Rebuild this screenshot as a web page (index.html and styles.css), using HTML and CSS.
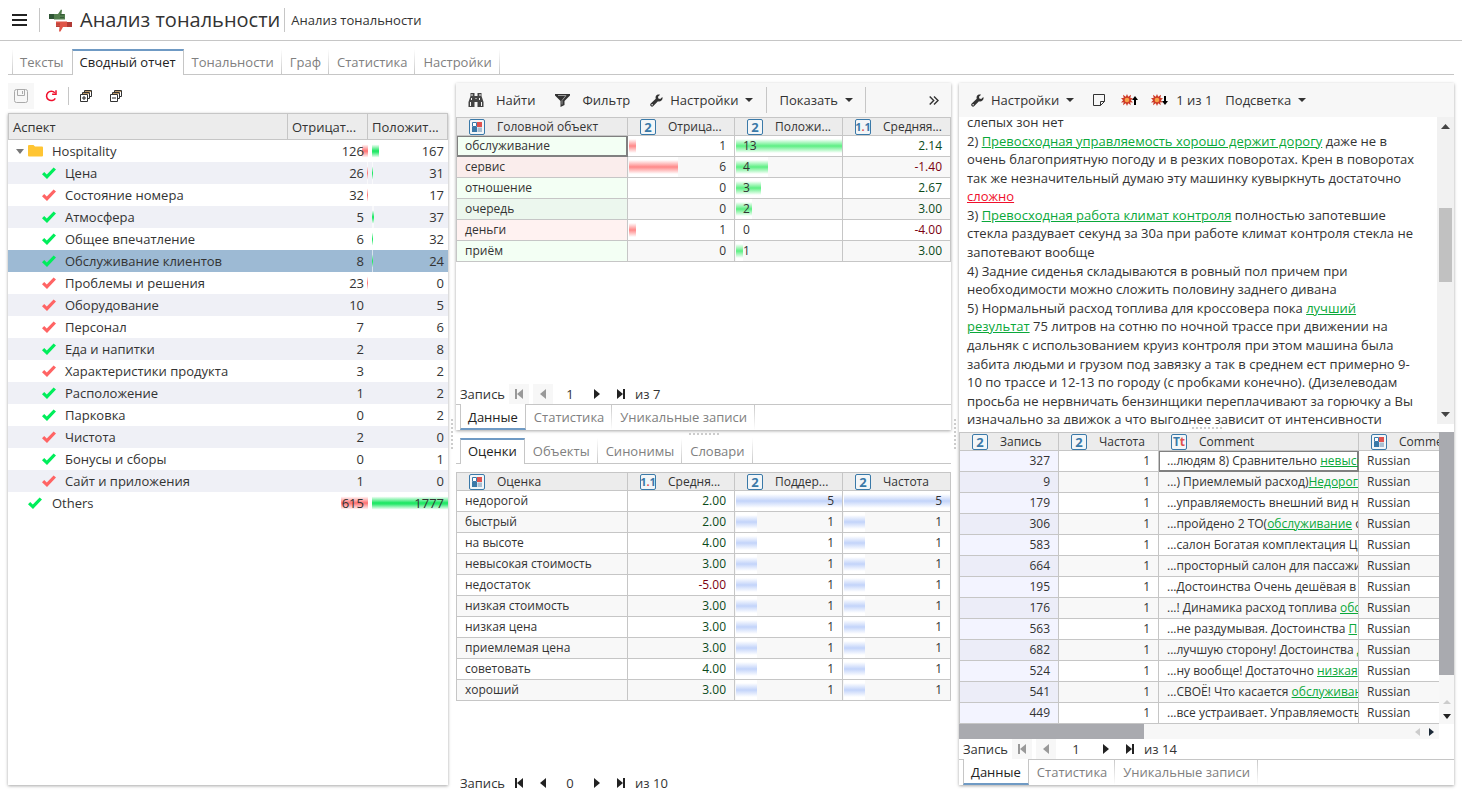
FILE: index.html
```html
<!DOCTYPE html>
<html lang="ru">
<head>
<meta charset="utf-8">
<title>Анализ тональности</title>
<link rel="stylesheet" href="styles.css">
</head>
<body>
<svg class="sprite" aria-hidden="true">
  <symbol id="check" viewBox="0 0 14 12"><path d="M0 7.2 2.2 5l2.6 2.4L11.6.6 14 2.4 5 12z" fill="currentColor"/></symbol>
  <symbol id="folder" viewBox="0 0 15 12"><path d="M1 0h4.500l1.500 1.500H14a1 1 0 0 1 1 1V10.500a1 1 0 0 1-1 1H1a1 1 0 0 1-1-1V1a1 1 0 0 1 1-1z" fill="#ffc533"/></symbol>
  <symbol id="wrench" viewBox="0 0 14 14"><path d="M13.300 3.200 11 5.300 9 4.900 8.600 3 10.800.8C9.300.2 7.400.6 6.500 2 5.900 3 5.900 4.200 6.200 5.200L.8 10.200c-.8.8-.8 2 0 2.800s2 .8 2.800 0L8.600 7.800c1.200.4 2.700.2 3.700-.7 1.100-1 1.500-2.500 1-3.900z" fill="#333"/><circle cx="2.300" cy="11.600" r=".8" fill="#f7f7f7"/></symbol>
  <symbol id="first" viewBox="0 0 10 12"><path d="M2 1v10" stroke="currentColor" stroke-width="2"/><path d="M9 1v10L3 6z" fill="currentColor"/></symbol>
  <symbol id="prev" viewBox="0 0 10 12"><path d="M8 1v10L2 6z" fill="currentColor"/></symbol>
  <symbol id="next" viewBox="0 0 10 12"><path d="M2 1v10L8 6z" fill="currentColor"/></symbol>
  <symbol id="last" viewBox="0 0 10 12"><path d="M8 1v10" stroke="currentColor" stroke-width="2"/><path d="M1 1v10L7 6z" fill="currentColor"/></symbol>
  <symbol id="kind" viewBox="0 0 12 12"><path d="M1.500 1.500h4v4h-4z" fill="#fff" stroke="#3a79a8"/><path d="M6 1h5v5H6z" fill="#e0524e"/><path d="M1 6h5v5H1z" fill="#3a79a8"/><path d="M6.500 6.500H11V11H6.500z" fill="#a9bfd2"/></symbol>
  <symbol id="bang" viewBox="0 0 12 12"><path d="M6 0 7.200 2.800 10 .8 9.400 3.900 12 4.200 9.900 6.200 12 8.400 9.200 8.300 9.800 11.300 7.200 9.300 6 12 4.800 9.300 2 11.300 2.700 8.300 0 8.600 2.100 6.200 0 3.900 2.700 3.900 2 .8 4.800 2.800z" fill="#cf3b28"/><circle cx="6" cy="6" r="2.300" fill="#f7a14a"/></symbol>
  <symbol id="stack" viewBox="0 0 12 12"><path d="M4.500 2V.500h7v6H10M2.500 4V2.500h7v6H8" fill="none" stroke="#333"/><path d="M5 1h6v1H5zM3 3h6v1H3z" fill="#b89565"/><path d="M.5 4.500h7v7h-7z" fill="#fff" stroke="#333"/><path d="M2 8h4" stroke="#222"/></symbol>
</svg>

<header class="top">
  <button class="menu" aria-label="Меню"><svg width="15" height="12" viewBox="0 0 15 12"><path d="M0 1h15M0 6h15M0 11h15" stroke="#222" stroke-width="2"/></svg></button>
  <i class="rule"></i>
  <svg class="logo" width="23" height="23" viewBox="0 0 23 23"><path d="M0 5h5v5H0z" fill="#2f5535"/><path d="M5 5h4l3-4.500L13 1l-.5 4H16v5.500H5z" fill="#527e4d"/><path d="M11 5h4v1.300h-4zM11 8h4v1h-4z" fill="#365d39"/><path d="M18 13h5v5h-5z" fill="#b13a35"/><path d="M18 12.500H7V18h3.500l-.5 4.500h1.500L14 18h4z" fill="#df5548"/><path d="M7 14.500h4v1H7zM7 16.700h4v1H7z" fill="#a93832"/></svg>
  <h1>Анализ тональности</h1>
  <i class="rule"></i>
  <span class="crumb">Анализ тональности</span>
</header>

<nav class="tabs main-tabs">
  <button>Тексты</button><button class="on">Сводный отчет</button><button>Тональности</button><button>Граф</button><button>Статистика</button><button>Настройки</button>
</nav>

<main class="work">
  <section class="aspects">
    <div class="tree-tools">
      <button class="off" aria-label="Сохранить"><svg width="14" height="14" viewBox="0 0 14 14" fill="none" stroke="#aaa"><rect x=".5" y=".5" width="13" height="13" rx="2"/><path d="M3.500.500v6h7v-6M8.500 2v3"/></svg></button>
      <button aria-label="Обновить"><svg width="12" height="12" viewBox="0 0 12 12" fill="none" stroke="#f00f2c" stroke-width="1.500"><path d="M9.800 2.800A4.700 4.700 0 1 0 10.300 8.300"/><path d="M11 .3V4.300H7.100"/></svg></button>
      <i class="rule"></i>
      <button aria-label="Развернуть все"><svg width="12" height="12"><use href="#stack"/><path d="M4 6v4" stroke="#222"/></svg></button>
      <button aria-label="Свернуть все"><svg width="12" height="12"><use href="#stack"/></svg></button>
    </div>
    <div class="panel tree-panel">
      <table class="tree">
        <colgroup><col><col class="w80"><col class="w80"></colgroup>
        <thead><tr><th>Аспект</th><th>Отрицат...</th><th>Положит...</th></tr></thead>
        <tbody>
          <tr><td class="root"><svg class="twist" width="8" height="5" viewBox="0 0 8 5"><path d="M0 0h8L4 5z" fill="#777"/></svg><svg width="15" height="12"><use href="#folder"/></svg>Hospitality</td><td><i class="bar neg" style="width:6px"></i><b>126</b></td><td><i class="bar pos" style="width:7px"></i><b>167</b></td></tr>
          <tr><td class="good"><svg width="14" height="12"><use href="#check"/></svg>Цена</td><td><i class="bar neg" style="width:1px"></i><b>26</b></td><td><i class="bar pos" style="width:1px"></i><b>31</b></td></tr>
          <tr><td class="bad"><svg width="14" height="12"><use href="#check"/></svg>Состояние номера</td><td><i class="bar neg" style="width:1px"></i><b>32</b></td><td><b>17</b></td></tr>
          <tr><td class="good"><svg width="14" height="12"><use href="#check"/></svg>Атмосфера</td><td><b>5</b></td><td><i class="bar pos" style="width:2px"></i><b>37</b></td></tr>
          <tr><td class="good"><svg width="14" height="12"><use href="#check"/></svg>Общее впечатление</td><td><b>6</b></td><td><i class="bar pos" style="width:1px"></i><b>32</b></td></tr>
          <tr class="sel"><td class="good"><svg width="14" height="12"><use href="#check"/></svg>Обслуживание клиентов</td><td><b>8</b></td><td><i class="bar pos" style="width:1px"></i><b>24</b></td></tr>
          <tr><td class="bad"><svg width="14" height="12"><use href="#check"/></svg>Проблемы и решения</td><td><i class="bar neg" style="width:1px"></i><b>23</b></td><td><b>0</b></td></tr>
          <tr><td class="bad"><svg width="14" height="12"><use href="#check"/></svg>Оборудование</td><td><b>10</b></td><td><b>5</b></td></tr>
          <tr><td class="bad"><svg width="14" height="12"><use href="#check"/></svg>Персонал</td><td><b>7</b></td><td><b>6</b></td></tr>
          <tr><td class="good"><svg width="14" height="12"><use href="#check"/></svg>Еда и напитки</td><td><b>2</b></td><td><b>8</b></td></tr>
          <tr><td class="bad"><svg width="14" height="12"><use href="#check"/></svg>Характеристики продукта</td><td><b>3</b></td><td><b>2</b></td></tr>
          <tr><td class="good"><svg width="14" height="12"><use href="#check"/></svg>Расположение</td><td><b>1</b></td><td><b>2</b></td></tr>
          <tr><td class="good"><svg width="14" height="12"><use href="#check"/></svg>Парковка</td><td><b>0</b></td><td><b>2</b></td></tr>
          <tr><td class="bad"><svg width="14" height="12"><use href="#check"/></svg>Чистота</td><td><b>2</b></td><td><b>0</b></td></tr>
          <tr><td class="good"><svg width="14" height="12"><use href="#check"/></svg>Бонусы и сборы</td><td><b>0</b></td><td><b>1</b></td></tr>
          <tr><td class="bad"><svg width="14" height="12"><use href="#check"/></svg>Сайт и приложения</td><td><b>1</b></td><td><b>0</b></td></tr>
          <tr><td class="good flat"><svg width="14" height="12"><use href="#check"/></svg>Others</td><td><i class="bar neg" style="width:27px"></i><b>615</b></td><td><i class="bar pos" style="width:76px"></i><b>1777</b></td></tr>
        </tbody>
      </table>
    </div>
  </section>

  <div class="split vert"><i></i></div>

  <section class="middle">
    <div class="panel upper">
      <div class="tools">
        <button class="find"><svg width="16" height="14" viewBox="0 0 16 14" fill="#444"><path d="M2.500 0h4v3h3V0h4v3l2 6v5H9.500V9h-3v5H.5V9l2-6z"/><path d="M4 1v2M12 1v2M3.500 5v2M2.500 9v4M13.500 9v4M11.500 5v2M7.500 5.500h1" stroke="#f7f7f7"/></svg>Найти</button>
        <button class="filter"><svg width="15" height="13" viewBox="0 0 15 13"><path d="M0 0h15v1.500L9.500 7v4L5.500 13V7L0 1.500z" fill="#333"/><path d="M3 1.500h8L7 6.500v4" fill="none" stroke="#999"/></svg>Фильтр</button>
        <button class="conf"><svg width="13" height="13"><use href="#wrench"/></svg>Настройки<i class="caret"></i></button>
        <i class="rule"></i>
        <button class="show">Показать<i class="caret"></i></button>
        <i class="rule"></i>
        <button class="more" aria-label="Ещё"><svg width="10" height="9" viewBox="0 0 10 9"><path d="M.700.500l4 4-4 4M5 .500l4 4-4 4" fill="none" stroke="#333" stroke-width="1.400"/></svg></button>
      </div>
      <table class="grid">
        <colgroup><col><col class="w107"><col class="w108"><col class="w108"></colgroup>
        <thead><tr>
          <th><span class="hd"><span class="ty"><svg width="12" height="12"><use href="#kind"/></svg></span>Головной объект</span></th>
          <th><span class="hd"><span class="ty">2</span>Отрица...</span></th>
          <th><span class="hd"><span class="ty">2</span>Положи...</span></th>
          <th><span class="hd"><span class="ty dec">1<em>.</em>1</span>Средняя...</span></th>
        </tr></thead>
        <tbody>
          <tr><td class="tg cur">обслуживание</td><td class="n"><i class="bar r" style="width:7%"></i><b>1</b></td><td><i class="bar g" style="width:100%"></i><b>13</b></td><td class="n up">2.14</td></tr>
          <tr><td class="tr">сервис</td><td class="n"><i class="bar r" style="width:46%"></i><b>6</b></td><td><i class="bar g" style="width:30%"></i><b>4</b></td><td class="n down">-1.40</td></tr>
          <tr><td class="tg">отношение</td><td class="n">0</td><td><i class="bar g" style="width:23%"></i><b>3</b></td><td class="n up">2.67</td></tr>
          <tr><td class="tg">очередь</td><td class="n">0</td><td><i class="bar g" style="width:15%"></i><b>2</b></td><td class="n up">3.00</td></tr>
          <tr><td class="tr">деньги</td><td class="n"><i class="bar r" style="width:7%"></i><b>1</b></td><td>0</td><td class="n down">-4.00</td></tr>
          <tr><td class="tg">приём</td><td class="n">0</td><td><i class="bar g" style="width:7%"></i><b>1</b></td><td class="n up">3.00</td></tr>
        </tbody>
      </table>
      <div class="pager">
        <label for="rec1">Запись</label>
        <button class="off" aria-label="Первая"><svg width="10" height="12"><use href="#first"/></svg></button>
        <button class="off" aria-label="Назад"><svg width="10" height="12"><use href="#prev"/></svg></button>
        <input id="rec1" type="text" value="1">
        <button aria-label="Вперёд"><svg width="10" height="12"><use href="#next"/></svg></button>
        <button aria-label="Последняя"><svg width="10" height="12"><use href="#last"/></svg></button>
        <span>из 7</span>
      </div>
      <nav class="tabs under"><button class="on">Данные</button><button>Статистика</button><button>Уникальные записи</button></nav>
    </div>
    <div class="split horz"><i></i></div>
    <div class="lower">
      <nav class="tabs"><button class="on">Оценки</button><button>Объекты</button><button>Синонимы</button><button>Словари</button></nav>
      <table class="grid">
        <colgroup><col><col class="w107"><col class="w108"><col class="w108"></colgroup>
        <thead><tr>
          <th><span class="hd"><span class="ty"><svg width="12" height="12"><use href="#kind"/></svg></span>Оценка</span></th>
          <th><span class="hd"><span class="ty dec">1<em>.</em>1</span>Средня...</span></th>
          <th><span class="hd"><span class="ty">2</span>Поддер...</span></th>
          <th><span class="hd"><span class="ty">2</span>Частота</span></th>
        </tr></thead>
        <tbody>
          <tr><td>недорогой</td><td class="n up">2.00</td><td class="n"><i class="bar u" style="width:100%"></i><b>5</b></td><td class="n"><i class="bar u" style="width:100%"></i><b>5</b></td></tr>
          <tr><td>быстрый</td><td class="n up">2.00</td><td class="n"><i class="bar u" style="width:20%"></i><b>1</b></td><td class="n"><i class="bar u" style="width:20%"></i><b>1</b></td></tr>
          <tr><td>на высоте</td><td class="n up">4.00</td><td class="n"><i class="bar u" style="width:20%"></i><b>1</b></td><td class="n"><i class="bar u" style="width:20%"></i><b>1</b></td></tr>
          <tr><td>невысокая стоимость</td><td class="n up">3.00</td><td class="n"><i class="bar u" style="width:20%"></i><b>1</b></td><td class="n"><i class="bar u" style="width:20%"></i><b>1</b></td></tr>
          <tr><td>недостаток</td><td class="n down">-5.00</td><td class="n"><i class="bar u" style="width:20%"></i><b>1</b></td><td class="n"><i class="bar u" style="width:20%"></i><b>1</b></td></tr>
          <tr><td>низкая стоимость</td><td class="n up">3.00</td><td class="n"><i class="bar u" style="width:20%"></i><b>1</b></td><td class="n"><i class="bar u" style="width:20%"></i><b>1</b></td></tr>
          <tr><td>низкая цена</td><td class="n up">3.00</td><td class="n"><i class="bar u" style="width:20%"></i><b>1</b></td><td class="n"><i class="bar u" style="width:20%"></i><b>1</b></td></tr>
          <tr><td>приемлемая цена</td><td class="n up">3.00</td><td class="n"><i class="bar u" style="width:20%"></i><b>1</b></td><td class="n"><i class="bar u" style="width:20%"></i><b>1</b></td></tr>
          <tr><td>советовать</td><td class="n up">4.00</td><td class="n"><i class="bar u" style="width:20%"></i><b>1</b></td><td class="n"><i class="bar u" style="width:20%"></i><b>1</b></td></tr>
          <tr><td>хороший</td><td class="n up">3.00</td><td class="n"><i class="bar u" style="width:20%"></i><b>1</b></td><td class="n"><i class="bar u" style="width:20%"></i><b>1</b></td></tr>
        </tbody>
      </table>
      <div class="pager">
        <label for="rec2">Запись</label>
        <button aria-label="Первая"><svg width="10" height="12"><use href="#first"/></svg></button>
        <button aria-label="Назад"><svg width="10" height="12"><use href="#prev"/></svg></button>
        <input id="rec2" type="text" value="0">
        <button aria-label="Вперёд"><svg width="10" height="12"><use href="#next"/></svg></button>
        <button aria-label="Последняя"><svg width="10" height="12"><use href="#last"/></svg></button>
        <span>из 10</span>
      </div>
    </div>
  </section>

  <div class="split vert"><i></i></div>

  <section class="panel texts">
    <div class="tools">
      <button class="conf"><svg width="13" height="13"><use href="#wrench"/></svg>Настройки<i class="caret"></i></button>
      <button class="note" aria-label="Заметка"><svg width="12" height="12" viewBox="0 0 12 12" fill="none" stroke="#333"><path d="M.5.500h11v7l-4 4h-7zM11.500 7.500h-4v4"/></svg></button>
      <button class="jump" aria-label="Предыдущее"><svg width="17" height="12"><use href="#bang" width="12" height="12"/><path d="M14 2l3 4h-2v5h-2V6h-2z"/></svg></button>
      <button class="jump" aria-label="Следующее"><svg width="17" height="12"><use href="#bang" width="12" height="12"/><path d="M14 11l3-4h-2V2h-2v5h-2z"/></svg></button>
      <span class="count">1 из 1</span>
      <button class="light">Подсветка<i class="caret"></i></button>
    </div>
    <div class="reader">
      <div class="clip"><p>слепых зон нет<br>2) <a href="#">Превосходная управляемость хорошо держит дорогу</a> даже не в очень благоприятную погоду и в резких поворотах. Крен в поворотах так же незначительный думаю эту машинку кувыркнуть достаточно <a class="minus" href="#">сложно</a><br>3) <a href="#">Превосходная работа климат контроля</a> полностью запотевшие стекла раздувает секунд за 30а при работе климат контроля стекла не запотевают вообще<br>4) Задние сиденья складываются в ровный пол причем при необходимости можно сложить половину заднего дивана<br>5) Нормальный расход топлива для кроссовера пока <a href="#">лучший результат</a> 75 литров на сотню по ночной трассе при движении на дальняк с использованием круиз контроля при этом машина была забита людьми и грузом под завязку а так в среднем ест примерно 9-10 по трассе и 12-13 по городу (с пробками конечно). (Дизелеводам просьба не нервничать бензинщики переплачивают за горючку а Вы изначально за движок а что выгоднее зависит от интенсивности</p></div>
      <div class="scroll"><svg width="9" height="5" viewBox="0 0 9 5"><path d="M0 5h9L4.500 0z" fill="#444"/></svg><div class="track"><i></i></div><svg width="9" height="5" viewBox="0 0 9 5"><path d="M0 0h9L4.500 5z" fill="#444"/></svg></div>
    </div>
    <div class="split horz"><i></i></div>
    <div class="records">
      <div class="clip">
        <table class="grid wide">
          <colgroup><col class="w99"><col class="w100"><col class="w200"><col class="w120"></colgroup>
          <thead><tr>
            <th><span class="hd"><span class="ty">2</span>Запись</span></th>
            <th><span class="hd"><span class="ty">2</span>Частота</span></th>
            <th><span class="hd"><span class="ty txt">T<em>t</em></span>Comment</span></th>
            <th><span class="hd"><span class="ty"><svg width="12" height="12"><use href="#kind"/></svg></span>Comment</span></th>
          </tr></thead>
          <tbody>
            <tr><td class="n id">327</td><td class="n">1</td><td class="cur">...людям 8) Сравнительно <a href="#">невысокая</a></td><td>Russian</td></tr>
            <tr><td class="n id">9</td><td class="n">1</td><td>...) Приемлемый расход)<a href="#">Недорогой</a></td><td>Russian</td></tr>
            <tr><td class="n id">179</td><td class="n">1</td><td>...управляемость внешний вид на</td><td>Russian</td></tr>
            <tr><td class="n id">306</td><td class="n">1</td><td>...пройдено 2 ТО(<a href="#">обслуживание</a> от</td><td>Russian</td></tr>
            <tr><td class="n id">583</td><td class="n">1</td><td>...салон Богатая комплектация Це</td><td>Russian</td></tr>
            <tr><td class="n id">664</td><td class="n">1</td><td>...просторный салон для пассажиров</td><td>Russian</td></tr>
            <tr><td class="n id">195</td><td class="n">1</td><td>...Достоинства Очень дешёвая в</td><td>Russian</td></tr>
            <tr><td class="n id">176</td><td class="n">1</td><td>...! Динамика расход топлива <a href="#">обслуживание</a></td><td>Russian</td></tr>
            <tr><td class="n id">563</td><td class="n">1</td><td>...не раздумывая. Достоинства <a href="#">Прекрасная</a></td><td>Russian</td></tr>
            <tr><td class="n id">682</td><td class="n">1</td><td>...лучшую сторону! Достоинства <a href="#">дешёвый</a></td><td>Russian</td></tr>
            <tr><td class="n id">524</td><td class="n">1</td><td>...ну вообще! Достаточно <a href="#">низкая</a></td><td>Russian</td></tr>
            <tr><td class="n id">541</td><td class="n">1</td><td>...СВОЁ! Что касается <a href="#">обслуживания</a></td><td>Russian</td></tr>
            <tr><td class="n id">449</td><td class="n">1</td><td>...все устраивает. Управляемость</td><td>Russian</td></tr>
          </tbody>
        </table>
      </div>
      <div class="vbar"><i></i><svg width="8" height="5" viewBox="0 0 8 5"><path d="M0 4h8L4 0z" fill="#ccc"/></svg><svg width="8" height="5" viewBox="0 0 8 5"><path d="M0 0h8L4 5z" fill="#222"/></svg></div>
      <div class="hbar"><i></i><svg width="5" height="8" viewBox="0 0 5 8"><path d="M5 0v8L0 4z" fill="#ccc"/></svg><svg width="5" height="8" viewBox="0 0 5 8"><path d="M0 0v8L5 4z" fill="#1c2a38"/></svg></div>
    </div>
    <div class="pager roomy">
      <label for="rec3">Запись</label>
      <button class="off" aria-label="Первая"><svg width="10" height="12"><use href="#first"/></svg></button>
      <button class="off" aria-label="Назад"><svg width="10" height="12"><use href="#prev"/></svg></button>
      <input id="rec3" type="text" value="1">
      <button aria-label="Вперёд"><svg width="10" height="12"><use href="#next"/></svg></button>
      <button aria-label="Последняя"><svg width="10" height="12"><use href="#last"/></svg></button>
      <span>из 14</span>
    </div>
    <nav class="tabs under"><button class="on">Данные</button><button>Статистика</button><button>Уникальные записи</button></nav>
  </section>
</main>
</body>
</html>
```

FILE: styles.css
```css
* { box-sizing: border-box; }
body {
  margin: 0;
  height: 100vh;
  display: flex;
  flex-direction: column;
  overflow: hidden;
  background: #fff;
  color: #333;
  font: 13px/18px "Open Sans", "Noto Sans", sans-serif;
}
button, input { font: inherit; color: inherit; border: 0; padding: 0; margin: 0; background: none; }
button { display: flex; align-items: center; justify-content: center; white-space: nowrap; flex: none; }
svg { flex: none; display: block; }
i, em { font-style: normal; }
b { font-weight: normal; position: relative; }
a { color: #0aa83a; text-decoration: underline; }
a.minus { color: #f00f2c; }
.sprite { position: absolute; width: 0; height: 0; }
.rule { width: 1px; background: #c6c6c6; flex: none; }

/* page header */
.top { display: flex; align-items: center; height: 41px; flex: none; padding-left: 12px; border-bottom: 1px solid #c6c6c6; }
.top .rule { height: 24px; }
.menu { margin-right: 12px; }
.logo { margin: 0 8px 0 9px; }
h1 { margin: 0 4px 0 0; font-size: 20px; font-weight: normal; line-height: 28px; }
.crumb { margin-left: 6px; }

/* tab strips */
.tabs { display: flex; height: 26px; flex: none; padding-left: 4px; background: linear-gradient(#c6c6c6, #c6c6c6) bottom / 100% 1px no-repeat; }
.tabs button {
  padding: 0 8px;
  color: #808080;
  background: linear-gradient(#fff, #c6c6c6) right / 1px 100% no-repeat;
}
.tabs button.on {
  padding: 0 7px 2px;
  color: #222;
  background: #fff;
  border: 1px solid #c6c6c6;
  border-top: 2px solid #6f9ac4;
  border-bottom: 0;
}
.main-tabs { margin: 8px 8px 0; }
.main-tabs button:first-child { background: linear-gradient(#fff, #c6c6c6) left / 1px 100% no-repeat; }
.tabs.under { background: linear-gradient(#c6c6c6, #c6c6c6) top / 100% 1px no-repeat; }
.tabs.under button { background: linear-gradient(#c6c6c6, #fff) right / 1px 100% no-repeat; }
.tabs.under button.on { background: #fff; border-top: 0; border-bottom: 2px solid #6f9ac4; padding: 2px 7px 0; }

/* workspace */
.work { flex: 1; min-height: 0; margin: 8px 8px 0; display: grid; grid-template-columns: 440fr 8px 495fr 8px 495fr; }
.panel { background: #fff; box-shadow: 0 1px 3px rgba(0, 0, 0, .35); }
.split { display: flex; align-items: center; justify-content: center; flex: none; }
.split.vert { margin-bottom: 8px; }
.split.horz { height: 8px; }
.split.vert i { width: 2px; height: 30px; background: repeating-linear-gradient(#ccc 0 2px, transparent 2px 4px); }
.split.horz i { width: 30px; height: 2px; background: repeating-linear-gradient(90deg, #ccc 0 2px, transparent 2px 4px); }

/* aspects tree */
.aspects { display: flex; flex-direction: column; min-width: 0; margin-bottom: 8px; }
.tree-tools { display: flex; align-items: center; gap: 4px; height: 26px; margin-bottom: 4px; }
.tree-tools button { width: 26px; height: 26px; }
.tree-tools .rule { height: 18px; }
.off { background: #f7f7f7; color: #999; }
.tree-panel { flex: 1; }
table { border-spacing: 0; table-layout: fixed; width: 100%; }
th { font-weight: normal; text-align: left; }
th, td { padding: 0; white-space: nowrap; overflow: hidden; position: relative; }
.w80 { width: 80px; }
.w99 { width: 99px; }
.w100 { width: 100px; }
.w107 { width: 107px; }
.w108 { width: 108px; }
.w120 { width: 120px; }
.w200 { width: 200px; }
.tree th { height: 27px; padding-left: 4px; background: #ececec; border: solid #c6c6c6; border-width: 1px 1px 1px 0; }
.tree th:first-child { border-left-width: 1px; }
.tree td { height: 22px; text-align: right; padding-right: 4px; }
.tree td:first-child { text-align: left; padding-left: 57px; }
.tree td:first-child.root, .tree td:first-child.flat { padding-left: 44px; }
.tree td > svg { position: absolute; left: 34px; top: 5px; }
.tree .root > svg, .tree .flat > svg { left: 20px; }
.tree .root > svg.twist { left: 8px; top: 9px; }
.tree tr:nth-child(even) { background: #eff0f6; }
.tree tr.sel { background: #9dbad4; }
.good > svg { color: #00ee5b; }
.bad > svg { color: #ff6464; }

/* value bars behind numbers */
.bar { position: absolute; top: 0; bottom: 0; left: 1px; max-width: calc(100% - 1px); }
.bar.neg { left: auto; right: 0; background: linear-gradient(rgba(255, 255, 255, .6) 20%, #ff7a7a 48%, #ff7a7a 52%, rgba(255, 255, 255, .6) 80%); }
.bar.pos { left: 4px; background: linear-gradient(rgba(255, 255, 255, .6) 20%, #24e868 48%, #24e868 54%, rgba(255, 255, 255, .6) 80%); }
.bar.r { background: linear-gradient(#fff 15%, #ff8f8f 48%, #ff8f8f 52%, #fff 85%); }
.bar.g { background: linear-gradient(#fff 15%, #66f08a 48%, #66f08a 52%, #fff 85%); }
.bar.u { background: linear-gradient(#fff 15%, #c6d6fa 48%, #c6d6fa 52%, #fff 85%); }

/* data grids */
.grid { font-size: 12px; line-height: 18px; border: solid #c6c6c6; border-width: 1px 0 0 1px; }
.grid th, .grid td { border: solid #c6c6c6; border-width: 0 1px 1px 0; }
.grid th { height: 18px; line-height: 16px; background: #ececec; }
.grid td { height: 21px; padding: 0 8px; }
.hd { display: flex; align-items: center; gap: 12px; height: 17px; padding-left: 12px; }
.ty {
  width: 16px;
  height: 16px;
  flex: none;
  display: flex;
  align-items: center;
  justify-content: center;
  border: 1px solid #3a79a8;
  border-radius: 2px;
  background: #f3f6f8;
  color: #3a79a8;
  font-size: 13px;
  font-weight: 700;
}
.ty em { color: #e0524e; }
.ty.dec { font-size: 11px; }
.ty.txt { font-size: 12px; }
.n { text-align: right; }
.up { color: #0b4a1a; }
.down { color: #7b0010; }
.grid tr:nth-child(even) td { background: #f8f8f8; }
.grid td.tg { background: #f3fff4; }
.grid td.tr { background: #fff2f1; }
.grid tr:nth-child(even) td.tg { background: #ecf7ee; }
.grid tr:nth-child(even) td.tr { background: #faedec; }
.grid tr:last-child td.tg { background: #f3fff4; }
.grid td.id { background: #f3f4ff; }
.grid tr:nth-child(even) td.id { background: #ecedf8; }
.grid td.cur { border-color: #808080; box-shadow: inset 0 0 0 1px #808080; }
.grid.wide { width: 520px; }

/* toolbars */
.tools { display: flex; align-items: center; height: 34px; flex: none; background: #f7f7f7; padding: 0 12px; }
.tools .rule { height: 26px; }
.tools button svg { margin-right: 7px; }
.tools .find svg, .tools .filter svg { margin-right: 12px; }
.tools .find, .tools .filter { margin-right: 20px; }
.caret { border: 4px solid transparent; border-top-color: #333; border-bottom: 0; margin-left: 7px; }
.show { margin: 0 12px; }
.tools .conf { margin-right: 13px; }
.tools .more { margin-left: auto; }
.tools .more svg, .tools .note svg, .tools .jump svg { margin: 0; }
.note { margin: 0 16px 0 6px; }
.tools .jump { margin-right: 13px; }
.tools .count { margin-right: 13px; }
.tools .jump:nth-of-type(4) { margin-right: 8px; }

/* record navigator */
.pager { display: flex; align-items: center; gap: 4px; height: 20px; flex: none; padding-left: 4px; margin-top: auto; }
.pager button { width: 20px; height: 20px; color: #222; }
.pager button.off { color: #999; }
.pager input { width: 26px; text-align: center; }
.pager.roomy input { width: 32px; }

.middle { display: flex; flex-direction: column; min-width: 0; min-height: 0; }
.upper { flex: 347 1 0; display: flex; flex-direction: column; min-height: 0; }
.lower { flex: 355 1 0; display: flex; flex-direction: column; min-height: 0; }
.lower .grid { margin-top: 8px; }

/* text reader and records */
.texts { display: flex; flex-direction: column; min-width: 0; min-height: 0; margin-bottom: 8px; }
.clip { overflow: hidden; min-width: 0; }
.reader { flex: 1; min-height: 0; display: grid; grid-template-columns: 1fr 17px; grid-template-rows: 100%; }
.reader p { margin: -4px 18px 0 8px; line-height: 1.43; }
.scroll { display: flex; flex-direction: column; align-items: center; background: #f1f1f1; padding: 7px 0; }
.track { flex: 1; align-self: stretch; padding: 79px 2px 0; }
.track i { display: block; height: 74px; background: #c1c1c1; }
.records { display: grid; grid-template-columns: 1fr 15px; grid-template-rows: auto 15px; flex: none; }
.vbar { display: flex; flex-direction: column; align-items: center; gap: 9px; background: #f7f7f7; padding-bottom: 5px; }
.vbar i { flex: 1; align-self: stretch; margin-bottom: 16px; background: #a9aaaf; }
.hbar { display: flex; align-items: center; gap: 9px; background: #f7f7f7; padding-right: 5px; }
.hbar i { width: 39%; align-self: stretch; margin-right: auto; background: #a9aaaf; }
```
